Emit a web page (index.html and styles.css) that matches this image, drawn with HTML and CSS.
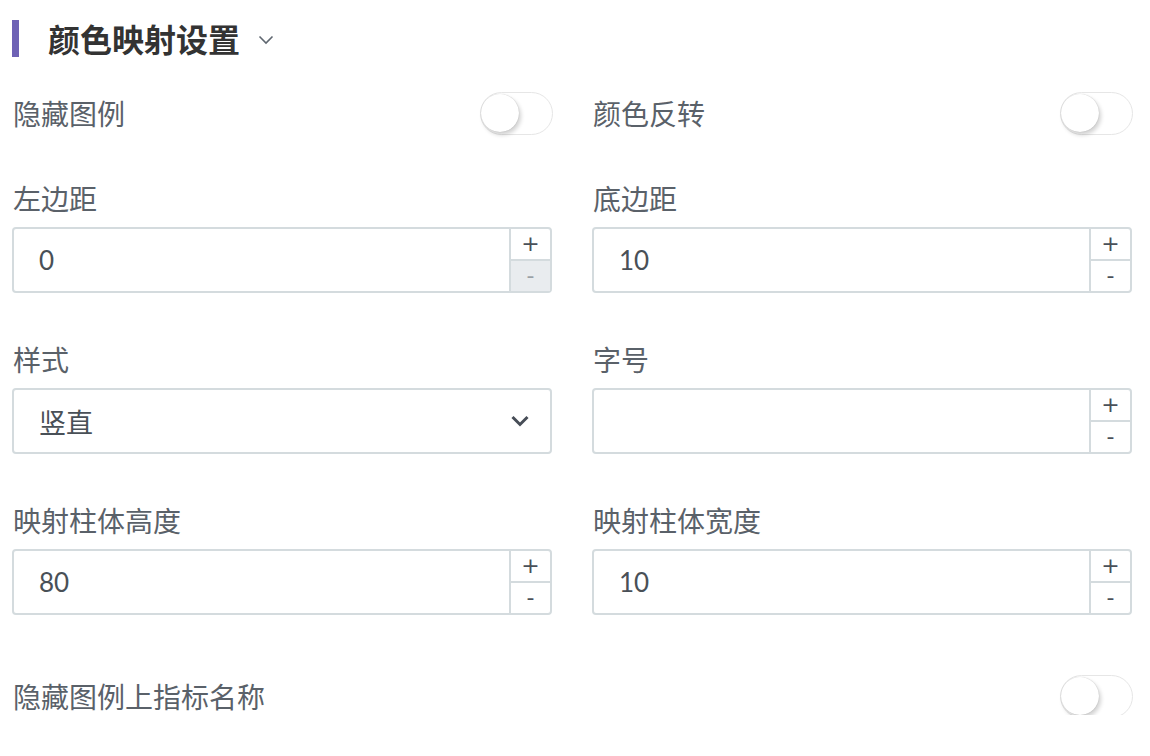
FILE: index.html
```html
<!DOCTYPE html>
<html lang="zh">
<head>
<meta charset="utf-8">
<link rel="stylesheet" href="styles.css">
</head>
<body>
<div class="panel">
  <div class="header">
    <span class="bar"></span>
    <span class="title">颜色映射设置</span>
    <svg class="caret" width="16" height="10" viewBox="0 0 16 10"><path d="M1.5 1.5 L8 8 L14.5 1.5" fill="none" stroke="#5f6770" stroke-width="1.6"/></svg>
  </div>

  <div class="grid">
    <div class="switch-row">
      <span class="label">隐藏图例</span>
      <span class="switch"><span class="knob"></span></span>
    </div>
    <div class="switch-row">
      <span class="label">颜色反转</span>
      <span class="switch"><span class="knob"></span></span>
    </div>

    <div class="field">
      <div class="label">左边距</div>
      <div class="input">
        <span class="value">0</span>
        <span class="stepper"><span class="step">+</span><span class="step disabled">-</span></span>
      </div>
    </div>
    <div class="field">
      <div class="label">底边距</div>
      <div class="input">
        <span class="value">10</span>
        <span class="stepper"><span class="step">+</span><span class="step">-</span></span>
      </div>
    </div>

    <div class="field">
      <div class="label">样式</div>
      <div class="input select">
        <span class="value">竖直</span>
        <svg class="sel-caret" width="20" height="14" viewBox="0 0 20 14"><path d="M2.5 3 L10 10.5 L17.5 3" fill="none" stroke="#474d57" stroke-width="3" stroke-linejoin="miter"/></svg>
      </div>
    </div>
    <div class="field">
      <div class="label">字号</div>
      <div class="input">
        <span class="value"></span>
        <span class="stepper"><span class="step">+</span><span class="step">-</span></span>
      </div>
    </div>

    <div class="field">
      <div class="label">映射柱体高度</div>
      <div class="input">
        <span class="value">80</span>
        <span class="stepper"><span class="step">+</span><span class="step">-</span></span>
      </div>
    </div>
    <div class="field">
      <div class="label">映射柱体宽度</div>
      <div class="input">
        <span class="value">10</span>
        <span class="stepper"><span class="step">+</span><span class="step">-</span></span>
      </div>
    </div>
  </div>

  <div class="switch-row last">
    <span class="label">隐藏图例上指标名称</span>
    <span class="switch"><span class="knob"></span></span>
  </div>
</div>
</body>
</html>
```

FILE: styles.css
```css
html, body {
  margin: 0;
  padding: 0;
  background: #ffffff;
}
body {
  font-family: "Lato", "Noto Sans CJK SC", sans-serif;
  color: #5a6169;
}
.panel {
  width: 1120px;
  padding: 20px 0 0 12px;
}
.header {
  display: flex;
  align-items: center;
  height: 37px;
}
.bar {
  width: 7px;
  height: 37px;
  background: #6e62b5;
  margin-right: 29px;
}
.title {
  font-family: "Noto Sans CJK SC", sans-serif;
  font-size: 32px;
  font-weight: 700;
  color: #333333;
  line-height: 37px;
}
.caret {
  margin-left: 18px;
  margin-top: 2px;
}
.grid {
  display: grid;
  grid-template-columns: 540px 540px;
  column-gap: 40px;
  row-gap: 48px;
  margin-top: 34px;
}
.label {
  font-family: "Noto Sans CJK SC", sans-serif;
  font-size: 28px;
  line-height: 36px;
  color: #5a6169;
  padding-left: 1px;
}
.switch-row {
  display: flex;
  align-items: center;
  justify-content: space-between;
  height: 44px;
  margin-bottom: -3px;
}
.switch-row.last {
  margin-top: 59px;
}
.switch {
  position: relative;
  width: 71px;
  height: 41px;
  border: 1px solid #e6e6e6;
  border-radius: 22px;
  background: #fff;
  box-sizing: content-box;
  margin-right: -1px;
}
.knob {
  position: absolute;
  left: 0;
  top: 1px;
  width: 38px;
  height: 38px;
  border-radius: 50%;
  background: #fff;
  box-shadow: 0 0 1px rgba(0,0,0,0.25), 2px 3px 4px rgba(0,0,0,0.18);
}
.field .label {
  margin-bottom: 11px;
}
.input {
  display: flex;
  align-items: stretch;
  height: 66px;
  box-sizing: border-box;
  border: 2px solid #d4dbde;
  border-radius: 4px;
  background: #fff;
}
.value {
  flex: 1;
  display: flex;
  align-items: center;
  padding-left: 25px;
  font-family: "Lato", "Noto Sans CJK SC", sans-serif;
  font-size: 26px;
  color: #495057;
}
.select .value {
  font-family: "Noto Sans CJK SC", sans-serif;
  font-size: 27px;
}
.sel-caret {
  align-self: center;
  margin-right: 20px;
}
.stepper {
  display: flex;
  flex-direction: column;
  width: 39px;
  border-left: 2px solid #d4dbde;
}
.step {
  flex: 1;
  display: flex;
  align-items: center;
  justify-content: center;
  font-family: "DejaVu Sans", sans-serif;
  font-size: 22px;
  color: #4a5058;
  line-height: 1;
}
.step + .step {
  border-top: 2px solid #d4dbde;
}
.step.disabled {
  background: #e9ecef;
  color: #9aa0a6;
}
```
